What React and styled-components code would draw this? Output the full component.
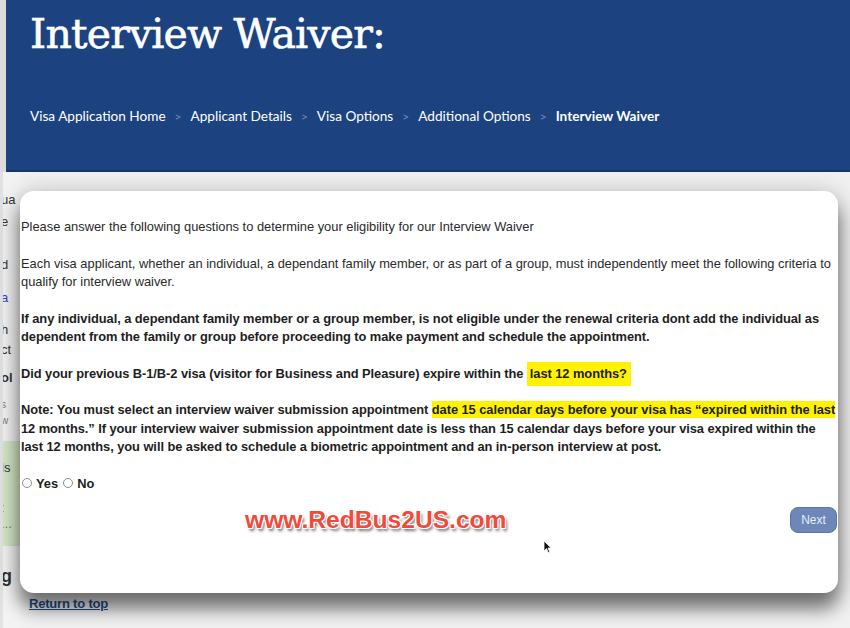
import React from 'react';
import styled, { createGlobalStyle } from 'styled-components';

const GlobalStyle = createGlobalStyle`
  html, body {
    margin: 0;
    padding: 0;
  }
  body {
    width: 850px;
    height: 628px;
    overflow: hidden;
    background: #f1f1f1;
    font-family: "Liberation Sans", Arial, sans-serif;
  }
`;

const Page = styled.div`
  width: 850px;
  height: 628px;
  display: flex;
  flex-direction: column;
  overflow: hidden;
`;

const HeaderRow = styled.div`
  display: flex;
  height: 172px;
  flex-shrink: 0;
  background: #dcdcdc;
`;

const Header = styled.header`
  flex: 1;
  margin-left: 6px;
  padding: 10px 0 0 24px;
  background: #1c4380;
  border-bottom: 2px solid #15366a;
`;

const Title = styled.h1`
  margin: 0;
  font-family: "DejaVu Serif", "Liberation Serif", serif;
  font-size: 41px;
  font-weight: normal;
  line-height: 48px;
  letter-spacing: -0.8px;
  color: #ffffff;
  -webkit-text-stroke: 0.6px #ffffff;
`;

const Crumbs = styled.nav`
  display: flex;
  align-items: center;
  margin-top: 48px;
  height: 20px;
  font-family: Lato, "Open Sans", sans-serif;
  font-size: 13.6px;
  color: #ffffff;
`;

const Crumb = styled.span`
  font-weight: ${(p) => (p.current ? 700 : 400)};
  white-space: nowrap;
`;

const Sep = styled.span`
  margin: 0 9px;
  font-size: 12px;
  color: #7388b0;
`;

const BodyRow = styled.div`
  flex: 1;
  display: flex;
  min-height: 0;
`;

const Sidebar = styled.aside`
  width: 20px;
  flex-shrink: 0;
  overflow: hidden;
  background: #f3f3f3;
  border-left: 3px solid #e2e2e2;
  box-sizing: border-box;
  font-size: 13px;
  line-height: 16px;
  color: #333;
`;

const Frag = styled.div`
  margin-top: ${(p) => p.gap || 0}px;
  margin-left: -2px;
  white-space: nowrap;
  color: ${(p) => p.color || '#333'};
  font-weight: ${(p) => (p.bold ? 700 : 400)};
  font-size: ${(p) => p.size || 13}px;
`;

const GreenBox = styled.div`
  margin-top: 12px;
  height: 105px;
  padding-top: 19px;
  box-sizing: border-box;
  background: #d5e8c6;
  font-size: 13px;
  line-height: 16px;
`;

const Main = styled.main`
  flex: 1;
  min-width: 0;
  padding: 19px 12px 0 0;
  display: flex;
  flex-direction: column;
`;

const Modal = styled.section`
  position: relative;
  height: 402px;
  box-sizing: border-box;
  padding: 27px 1px 0 1px;
  overflow: hidden;
  background: #ffffff;
  border-radius: 14px;
  box-shadow: 0 16px 18px rgba(0, 0, 0, 0.45), 0 4px 26px rgba(0, 0, 0, 0.28);
  color: #222;
  font-size: 12.87px;
  line-height: 18.5px;
`;

const Para = styled.p`
  margin: 0 0 18px 0;
  font-weight: ${(p) => (p.bold ? 700 : 400)};
  letter-spacing: ${(p) => (p.bold ? '-0.06px' : '0')};
  color: ${(p) => (p.bold ? '#1e1e1e' : '#2a2a2a')};
  white-space: nowrap;
`;

const Mark = styled.span`
  background: #fff200;
  padding: ${(p) => (p.tall ? '4px 4px 5px 3px' : '1px 0')};
`;

const Choices = styled.div`
  display: flex;
  align-items: center;
  height: 18.5px;
  font-weight: 700;
  color: #1e1e1e;
`;

const Radio = styled.span`
  display: inline-block;
  width: 8px;
  height: 8px;
  margin: 0 4px 2px 1px;
  border: 1px solid #8c8c8c;
  border-radius: 50%;
  background: #fff;
`;

const ChoiceLabel = styled.span`
  margin-right: 4px;
`;

const Footer = styled.div`
  display: flex;
  align-items: center;
  margin-top: 14px;
  height: 26px;
`;

const Watermark = styled.div`
  margin-left: 224px;
  font-family: "Liberation Sans", Arial, sans-serif;
  font-size: 24.6px;
  font-weight: 700;
  color: #f04a3c;
  text-shadow: -1px -1px 0 #fff, 1px -1px 0 #fff, -1px 1px 0 #fff, 1px 1px 0 #fff,
    2px 3px 3px rgba(0, 0, 0, 0.55);
`;

const NextButton = styled.button`
  margin-left: auto;
  width: 47px;
  height: 26px;
  padding: 0;
  border: 1px solid #5b76a6;
  border-radius: 8px;
  background: #6c87b8;
  color: #e6ecf6;
  font-family: "Liberation Sans", Arial, sans-serif;
  font-size: 12px;
`;

const Cursor = styled.svg`
  position: absolute;
  left: 523px;
  top: 349px;
`;

const ReturnLink = styled.a`
  margin: 3px 0 0 9px;
  font-size: 13px;
  font-weight: 700;
  color: #1f4e86;
  text-decoration: underline;
  line-height: 16px;
  letter-spacing: -0.2px;
`;

const crumbs = ['Visa Application Home', 'Applicant Details', 'Visa Options', 'Additional Options'];

export default function App() {
  return (
    <Page>
      <GlobalStyle />
      <HeaderRow>
        <Header>
          <Title>Interview Waiver:</Title>
          <Crumbs>
            {crumbs.map((c) => (
              <React.Fragment key={c}>
                <Crumb>{c}</Crumb>
                <Sep>&gt;</Sep>
              </React.Fragment>
            ))}
            <Crumb current>Interview Waiver</Crumb>
          </Crumbs>
        </Header>
      </HeaderRow>
      <BodyRow>
        <Sidebar>
          <Frag gap={20}>ua</Frag>
          <Frag gap={6}>e</Frag>
          <Frag gap={27}>d</Frag>
          <Frag gap={17} color="#3a3ad0">a</Frag>
          <Frag gap={16}>h</Frag>
          <Frag gap={4}>ct</Frag>
          <Frag gap={12} bold>ol</Frag>
          <Frag gap={11} size={10} color="#777">s</Frag>
          <Frag gap={0} size={10} color="#777">w</Frag>
          <GreenBox>
            <Frag>ls</Frag>
            <Frag gap={24} color="#777">:</Frag>
            <Frag gap={0} color="#777">...</Frag>
          </GreenBox>
          <Frag gap={22} bold size={18}>g</Frag>
        </Sidebar>
        <Main>
          <Modal>
            <Para>Please answer the following questions to determine your eligibility for our Interview Waiver</Para>
            <Para>
              Each visa applicant, whether an individual, a dependant family member, or as part of a group, must independently meet the following criteria to
              <br />
              qualify for interview waiver.
            </Para>
            <Para bold>
              If any individual, a dependant family member or a group member, is not eligible under the renewal criteria dont add the individual as
              <br />
              dependent from the family or group before proceeding to make payment and schedule the appointment.
            </Para>
            <Para bold>
              Did your previous B-1/B-2 visa (visitor for Business and Pleasure) expire within the <Mark tall>last 12 months?</Mark>
            </Para>
            <Para bold>
              Note: You must select an interview waiver submission appointment{' '}
              <Mark>date 15 calendar days before your visa has “expired within the last</Mark>
              <br />
              12 months.” If your interview waiver submission appointment date is less than 15 calendar days before your visa expired within the
              <br />
              last 12 months, you will be asked to schedule a biometric appointment and an in-person interview at post.
            </Para>
            <Choices>
              <Radio />
              <ChoiceLabel>Yes</ChoiceLabel>
              <Radio />
              <ChoiceLabel>No</ChoiceLabel>
            </Choices>
            <Footer>
              <Watermark>www.RedBus2US.com</Watermark>
              <NextButton>Next</NextButton>
            </Footer>
            <Cursor width="9" height="14" viewBox="0 0 9 14">
              <path d="M1 1 L1 11 L3.5 8.6 L5.3 12.6 L6.8 11.9 L5 8 L8.2 8 Z" fill="#111" stroke="#fff" strokeWidth="0.8" />
            </Cursor>
          </Modal>
          <ReturnLink href="#top">Return to top</ReturnLink>
        </Main>
      </BodyRow>
    </Page>
  );
}
